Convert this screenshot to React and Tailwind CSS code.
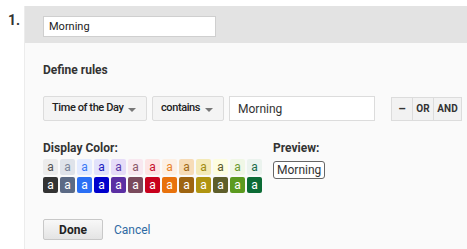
import { useState } from 'react'

const swatches = [
  { light: '#ececec', lightText: '#555555', dark: '#333333' },
  { light: '#dfe3ea', lightText: '#7a8599', dark: '#5b6a85' },
  { light: '#e3ebff', lightText: '#3a7af5', dark: '#2a6ff5' },
  { light: '#e2e2fb', lightText: '#2020c0', dark: '#0000cc' },
  { light: '#e6dcf8', lightText: '#5a3aa8', dark: '#5b2fa3' },
  { light: '#f8e8f0', lightText: '#8a5a6a', dark: '#7a4a5c' },
  { light: '#fde4e4', lightText: '#c8102e', dark: '#c8001c' },
  { light: '#fdf0e4', lightText: '#e8822a', dark: '#e8720c' },
  { light: '#f7dcb7', lightText: '#a06a18', dark: '#9e6410' },
  { light: '#f4eab8', lightText: '#a08a10', dark: '#b09410' },
  { light: '#fdfde0', lightText: '#5a5a2a', dark: '#5e5e2a' },
  { light: '#f0f7e6', lightText: '#6a9a30', dark: '#5b9a1f' },
  { light: '#ebf3ee', lightText: '#1a6a4a', dark: '#0b6b35' },
]

function Caret() {
  return <span className="ml-auto mt-[2px] h-0 w-0 shrink-0 border-x-[4px] border-t-[4px] border-x-transparent border-t-[#777]" />
}

function Select({ label, className }) {
  return (
    <div className={`flex h-[25px] items-center whitespace-nowrap rounded-[2px] border border-[#dcdcdc] bg-[#f4f4f4] pl-[8px] pr-[10px] text-[11px] font-medium tracking-[-0.4px] text-[#222] ${className}`}>
      <span>{label}</span>
      <Caret />
    </div>
  )
}

export default function App() {
  const [name, setName] = useState('Morning')
  const [value, setValue] = useState('Morning')

  return (
    <div className="flex min-h-[249px] bg-white font-['Roboto',sans-serif] text-[#333]">
      <div className="w-[24px] shrink-0 pl-[8px] pt-[10px] text-[14px] font-bold">1.</div>

      <div className="mt-[6px] flex-1 border-l border-[#ececec] bg-[#fafafa]">
        <div className="flex h-[37px] items-start bg-[#e3e3e3] pl-[18px] pt-[10px]">
          <input
            value={name}
            onChange={(e) => setName(e.target.value)}
            className="h-[21px] w-[173px] border border-[#cfcfcf] bg-white px-[5px] text-[11px] text-[#222] outline-none"
          />
        </div>

        <div className="pl-[18px]">
          <div className="pt-[19px] text-[12px] font-bold leading-[16px]">Define rules</div>

          <div className="mt-[18px] flex items-center">
            <Select label="Time of the Day" className="w-[104px]" />
            <Select label="contains" className="ml-[5px] w-[72px]" />
            <input
              value={value}
              onChange={(e) => setValue(e.target.value)}
              className="ml-[5px] h-[25px] w-[146px] border border-[#dcdcdc] bg-white px-[8px] text-[12px] text-[#333] outline-none"
            />
            <div className="ml-[16px] flex h-[24px] border border-[#dcdcdc] bg-[#f2f2f2] text-[10px] font-bold text-[#333]">
              <span className="flex w-[21px] items-center justify-center border-r border-[#dcdcdc] text-[12px]">–</span>
              <span className="flex w-[21px] items-center justify-center border-r border-[#dcdcdc]">OR</span>
              <span className="flex w-[27px] items-center justify-center">AND</span>
            </div>
          </div>

          <div className="mt-[19px] flex">
            <div>
              <div className="text-[12px] font-bold leading-[16px]">Display Color:</div>
              <div className="mt-[3px] grid grid-cols-[repeat(13,15px)] gap-x-[2px] gap-y-[2px]">
                {swatches.map((s, i) => (
                  <span
                    key={'l' + i}
                    className="flex h-[16px] items-center justify-center rounded-[2px] pb-[1px] text-[12px]"
                    style={{ backgroundColor: s.light, color: s.lightText }}
                  >
                    a
                  </span>
                ))}
                {swatches.map((s, i) => (
                  <span
                    key={'d' + i}
                    className="flex h-[16px] items-center justify-center rounded-[2px] pb-[1px] text-[12px] text-white"
                    style={{ backgroundColor: s.dark }}
                  >
                    a
                  </span>
                ))}
              </div>
            </div>
            <div className="ml-[11px]">
              <div className="text-[12px] font-bold leading-[16px]">Preview:</div>
              <div className="mt-[5px] inline-flex h-[18px] items-center rounded-[3px] border border-[#666] bg-white px-[3px] text-[12px] text-[#333]">
                Morning
              </div>
            </div>
          </div>

          <div className="mt-[26px] flex items-center">
            <button className="h-[21px] w-[60px] rounded-[2px] border border-[#c8c8c8] bg-gradient-to-b from-[#f8f8f8] to-[#e4e4e4] text-[12px] font-bold text-[#222]">
              Done
            </button>
            <a className="ml-[11px] text-[12px] text-[#2f6aa3]" href="#">
              Cancel
            </a>
          </div>
        </div>
      </div>
    </div>
  )
}
